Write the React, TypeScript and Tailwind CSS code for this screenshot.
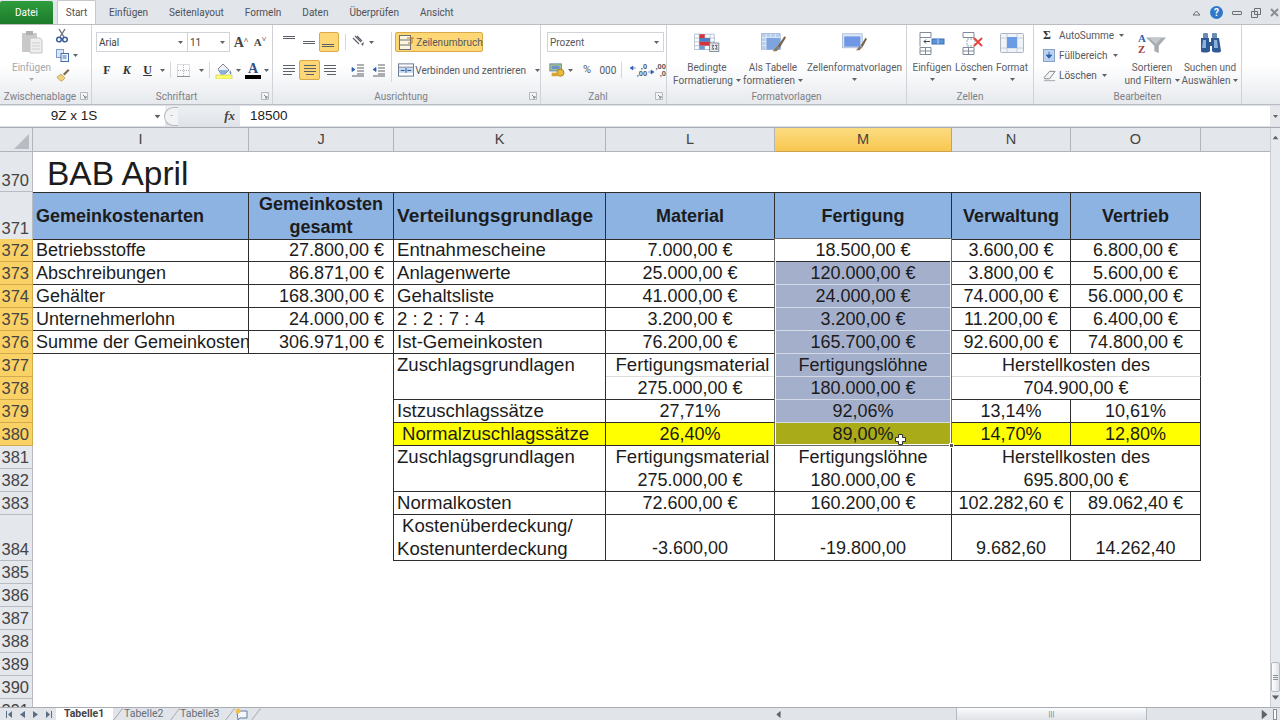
import type { ReactNode } from "react";

const Caret = ({ className = "" }: { className?: string }) => (
  <svg width="5" height="3" viewBox="0 0 5 3" className={`shrink-0 ${className}`}>
    <path d="M0 0h5L2.5 3z" fill="#5f6368" />
  </svg>
);

const Lines = ({ rows }: { rows: number[][] }) => (
  <svg width="16" height="14" viewBox="0 0 16 14">
    {rows.map((r, i) => (
      <rect key={i} x={r[0]} y={r[2]} width={r[1] - r[0]} height="1" fill="#5c6068" />
    ))}
  </svg>
);

const Launcher = () => (
  <svg width="8" height="8" viewBox="0 0 8 8">
    <path d="M.5.5h7v7h-7z" fill="#f2f3f5" stroke="#b5b8bd" />
    <path d="M3 3l3 3M6 4v2H4" stroke="#7d8087" fill="none" />
  </svg>
);

const Group = ({ label, className, children, launcher = false }: { label: string; className: string; children: ReactNode; launcher?: boolean }) => (
  <div className={`flex flex-col border-r border-[#cfd2d7] ${className}`}>
    <div className="h-[64px]">{children}</div>
    <div className="flex h-[14px] items-center text-[10px] text-[#7d8086]">
      <span className="flex-1 text-center">{label}</span>
      {launcher && (
        <span className="mr-[3px] flex">
          <Launcher />
        </span>
      )}
    </div>
  </div>
);

const Big = ({ className, icon, lines, caretInline = false }: { className: string; icon: ReactNode; lines: string[]; caretInline?: boolean }) => (
  <div className={`flex flex-col items-center pt-[6px] text-[10px] leading-[13px] text-[#5b5e64] ${className}`}>
    <div className="flex h-[24px] items-center justify-center">{icon}</div>
    <div className="mt-[6px] whitespace-nowrap text-center">{lines[0]}</div>
    {caretInline ? (
      <div className="flex items-center gap-[3px] whitespace-nowrap">
        {lines[1]}
        <Caret />
      </div>
    ) : (
      <Caret className="mt-[4px]" />
    )}
  </div>
);

const Clipboard = () => (
  <svg width="22" height="24" viewBox="0 0 22 24">
    <rect x="1" y="3" width="15" height="19" rx="1" fill="#c9c9c9" />
    <rect x="5" y="1" width="7" height="4" fill="#b0b0b0" />
    <path d="M9 8h10l2 2v13H9z" fill="#eeeeee" stroke="#c4c4c4" />
    <path d="M11 13h8M11 16h8M11 19h8" stroke="#cfcfcf" />
  </svg>
);

const Scissors = () => (
  <svg width="12" height="15" viewBox="0 0 12 15">
    <path d="M3 1l5 8M9 1L4 9" stroke="#6a7280" strokeWidth="1.4" />
    <circle cx="3" cy="11.5" r="2.3" fill="none" stroke="#3b5f9f" strokeWidth="1.6" />
    <circle cx="9" cy="11.5" r="2.3" fill="none" stroke="#3b5f9f" strokeWidth="1.6" />
  </svg>
);

const CopyIcon = () => (
  <svg width="13" height="13" viewBox="0 0 13 13">
    <rect x=".5" y=".5" width="7" height="8" fill="#dbe6f5" stroke="#7d9bc8" />
    <rect x="5" y="4.5" width="7.5" height="8" fill="#f2f6fc" stroke="#3f6db0" />
    <path d="M6.500 7h4M6.500 9h4" stroke="#3f6db0" />
  </svg>
);

const Brush = () => (
  <svg width="14" height="14" viewBox="0 0 14 14">
    <path d="M1 9l4-3 4 4-3 3c-2 0-4-2-5-4z" fill="#f1d27a" stroke="#a88b3c" strokeWidth=".6" />
    <path d="M7 6l5-5 1.500 1.500-5 5z" fill="#7d6a4a" />
  </svg>
);

const BorderGrid = () => (
  <svg width="13" height="13" viewBox="0 0 13 13">
    <path d="M.5.500h12v12H.5zM6.500 1v11M1 6.500h11" fill="none" stroke="#b4b8be" strokeDasharray="1 1" />
    <path d="M0 12.500h13" stroke="#8d9198" />
  </svg>
);

const Paint = () => (
  <svg width="18" height="17" viewBox="0 0 18 17">
    <path d="M3 7l5-5 6 6-4 4H6z" fill="#eef1f5" stroke="#7c8594" />
    <path d="M4 8h9l-3 4H6z" fill="#8ab0dc" />
    <path d="M15 8c1 2 2 3 1 4s-2-1-1-4z" fill="#6b85a8" />
    <rect x="1" y="13" width="16" height="4" fill="#ffff66" stroke="#b6b36a" strokeWidth=".5" />
  </svg>
);

const FontColor = () => (
  <div className="flex w-[16px] flex-col items-center">
    <span className="font-['Liberation_Serif',serif] text-[14px] font-bold leading-[13px] text-[#2f4f8f]">A</span>
    <div className="h-[4px] w-[16px] bg-black" />
  </div>
);

const Orient = () => (
  <svg width="15" height="14" viewBox="0 0 15 14">
    <path d="M2 3l6 6M4 1l6 6M6 1l5 5" stroke="#5c6068" strokeWidth="1.1" />
    <path d="M10 9l3-2-1 4z" fill="#5c6068" />
  </svg>
);

const Indent = ({ flip = false }: { flip?: boolean }) => (
  <svg width="14" height="13" viewBox="0 0 14 13">
    <path d="M6 1h7M6 4h7M6 7h7M6 10h7M1 12h12" stroke="#5c6068" />
    <path d={flip ? "M1 5.500h3M4 3.500v4L1 5.500z" : "M1 5.500h3M1 3.500v4l3-2z"} stroke="#2f62b0" fill="#2f62b0" strokeWidth=".8" />
  </svg>
);

const Wrap = () => (
  <svg width="16" height="15" viewBox="0 0 16 15" className="shrink-0">
    <rect x=".5" y=".5" width="11" height="14" fill="#fff7dd" stroke="#6d7077" />
    <path d="M1 5h10M1 10h10" stroke="#6d7077" />
    <path d="M8 3h7M13 3v5H9" stroke="#b0791d" fill="none" />
  </svg>
);

const Merge = () => (
  <svg width="16" height="14" viewBox="0 0 17 14" className="shrink-0">
    <rect x=".5" y=".5" width="16" height="13" fill="#fff" stroke="#67758d" />
    <path d="M1 4h15" stroke="#67758d" />
    <rect x="1" y="5" width="15" height="5" fill="#c4d9f2" />
    <path d="M3 7.500h4M14 7.500h-4M8.500 5v5" stroke="#21508f" />
  </svg>
);

const Money = () => (
  <svg width="18" height="17" viewBox="0 0 18 17">
    <rect x="1" y="1" width="13" height="8" fill="#a9c58e" stroke="#5f7f9f" />
    <rect x="3" y="3" width="9" height="4" fill="#6e93c5" />
    <circle cx="13" cy="11" r="4" fill="#e8b93a" stroke="#a47a1d" />
    <rect x="3" y="11" width="8" height="4" fill="#d9a52f" />
  </svg>
);

const Decimal = ({ a, b, flip = false }: { a: string; b: string; flip?: boolean }) => (
  <div className="flex w-[20px] items-center justify-center gap-[1px]">
    <svg width="6" height="10" viewBox="0 0 6 10" className="shrink-0">
      <path d={flip ? "M0 7h3M3 5v4L6 7z" : "M2 3h4M3 1v4L0 3z"} fill="#2f62b0" stroke="#2f62b0" strokeWidth=".6" />
    </svg>
    <div className="flex flex-col items-end font-['Liberation_Sans',sans-serif] text-[7.5px] font-bold leading-[7.5px] text-[#555]">
      <span>{a}</span>
      <span>{b}</span>
    </div>
  </div>
);

const Conditional = () => (
  <svg width="26" height="20" viewBox="0 0 34 25">
    <path d="M.500 1h26v20H.500z" fill="#fff" stroke="#9fb0c6" />
    <path d="M7 1v20M14 1v20M21 1v20M1 6h26M1 11h26M1 16h26" stroke="#a7b7cc" />
    <rect x="7" y="1" width="7" height="6" fill="#d6343b" />
    <rect x="7" y="6" width="14" height="5" fill="#4c7fc6" />
    <rect x="7" y="11" width="14" height="5" fill="#d6343b" />
    <rect x="7" y="16" width="7" height="5" fill="#6e98d2" />
    <rect x="20.500" y="12.500" width="12" height="11" fill="#eceef1" stroke="#68707c" />
    <path d="M23 15.500h3l-2 2.500 2 2.500h-3M31 15.500h-3l2 2.500-2 2.500h3" stroke="#2b3442" fill="none" />
  </svg>
);

const TableBrush = () => (
  <svg width="25" height="20" viewBox="0 0 32 25">
    <rect x=".5" y=".5" width="24" height="20" fill="#b9cfee" stroke="#9db2cf" />
    <path d="M6.500 1v20M12.500 1v20M18.500 1v20M1 5.500h24M1 10.500h24M1 15.500h24" stroke="#e8eef8" />
    <rect x="7" y="6" width="18" height="15" fill="#7fa4dd" />
    <path d="M15 23l5-6 3 2-3 4z" fill="#8a7658" />
    <path d="M21 17l9-13 2 1.500-8 13z" fill="#77644a" />
  </svg>
);

const StyleBrush = () => (
  <svg width="25" height="20" viewBox="0 0 34 26">
    <rect x=".5" y=".5" width="27" height="19" fill="#dfe7f3" stroke="#9db2cf" />
    <rect x="3" y="4" width="22" height="14" fill="#6f97e6" />
    <path d="M19 23l5-6 3 2-3 4z" fill="#8a7658" />
    <path d="M25 17l7-11 2 1.500-6 11z" fill="#77644a" />
  </svg>
);

const CellsInsert = () => (
  <svg width="26" height="23" viewBox="0 0 26 23">
    <path d="M1 .5h11v5H1zM1 15.500h11v7H1zM6.500 16v7M1 19h11" fill="#fff" stroke="#808b99" />
    <path d="M1 5.500v9" stroke="#808b99" />
    <rect x="13" y="7" width="12" height="5" fill="#5d93d8" stroke="#3a6fb4" />
    <path d="M19 7v5" stroke="#b9d3f2" />
    <path d="M11 9.500H5M7 7.500l-2 2 2 2" stroke="#3d4550" fill="none" />
  </svg>
);

const CellsDelete = () => (
  <svg width="24" height="23" viewBox="0 0 24 23">
    <path d="M1 .5h11v5H1zM1 15.500h11v7H1zM6.500 16v7M1 19h11" fill="#fff" stroke="#808b99" />
    <path d="M5 7h8v7H5z" fill="none" stroke="#9aa5b3" strokeDasharray="2 1" />
    <path d="M12 6l8 8M20 6l-8 8" stroke="#e4463e" strokeWidth="2" />
  </svg>
);

const FormatCells = () => (
  <svg width="24" height="24" viewBox="0 0 24 24">
    <rect x=".5" y="2.500" width="23" height="19" rx="1" fill="#f0f3f7" stroke="#aeb6c2" />
    <path d="M7 3v18M17 3v18M1 7h22M1 17h22" stroke="#c7ced8" />
    <rect x="7" y="6" width="10" height="11" fill="#6a9be3" />
  </svg>
);

const Fill = () => (
  <svg width="12" height="13" viewBox="0 0 13 14">
    <rect x=".5" y=".5" width="12" height="13" fill="#bcd2ee" stroke="#7f9cc4" />
    <path d="M6.500 3v6M3.500 6.500l3 3.500 3-3.500z" fill="#2f62b0" stroke="#2f62b0" />
  </svg>
);

const Eraser = () => (
  <svg width="14" height="12" viewBox="0 0 15 12">
    <path d="M1 8l6-7h6l-6 8H2z" fill="#f5f5f5" stroke="#7c8087" />
    <path d="M1 11h12" stroke="#9da1a8" />
  </svg>
);

const SortFilter = () => (
  <svg width="30" height="24" viewBox="0 0 33 24">
    <path d="M10 6h22l-8 9v8l-5-2v-6z" fill="#a9adb3" />
    <path d="M13 6h14l-6 7z" fill="#c6c9ce" />
    <text x="1" y="11" fontSize="12" fontWeight="700" fontFamily="Liberation Serif, serif" fill="#2e62aa">A</text>
    <text x="1" y="23" fontSize="12" fontWeight="700" fontFamily="Liberation Serif, serif" fill="#a83a3a">Z</text>
  </svg>
);

const Binoculars = () => (
  <svg width="24" height="22" viewBox="0 0 24 22">
    <rect x="5" y="1" width="5" height="6" rx="1" fill="#6b8bb5" />
    <rect x="14" y="1" width="5" height="6" rx="1" fill="#6b8bb5" />
    <path d="M3 6h8v4h2V6h8l2 13c0 2-8 2-9 0v-5h-2v5c-1 2-9 2-9 0z" fill="#2f5a93" />
    <path d="M5 8h3v8H4zM16 8h3l1 8h-4z" fill="#8db1dc" />
  </svg>
);

const Ribbon = () => (
  <div className="flex h-[81px] shrink-0 border-y border-[#b9bcc1] bg-gradient-to-b from-white from-50% to-[#e6e9ed] font-['Roboto',sans-serif]">
    <Group label="Zwischenablage" className="w-[92px]" launcher>
      <div className="flex">
        <div className="flex w-[54px] flex-col items-center pl-[9px] pt-[5px] text-[10px] leading-[13px] text-[#a5a7ab]">
          <div className="flex h-[24px] items-center">
            <Clipboard />
          </div>
          <div className="mt-[7px]">Einfügen</div>
          <Caret className="mt-[4px] opacity-50" />
        </div>
        <div className="flex flex-col gap-[6px] pl-[2px] pt-[3px]">
          <Scissors />
          <div className="flex items-center gap-[4px]">
            <CopyIcon />
            <Caret />
          </div>
          <Brush />
        </div>
      </div>
    </Group>

    <Group label="Schriftart" className="w-[181px]" launcher>
      <div className="flex flex-col gap-[8px] pl-[4px] pt-[7px]">
        <div className="flex h-[20px] items-center">
          <div className="flex h-[20px] w-[92px] items-center justify-between border border-[#d0d3d8] bg-white px-[2px] pr-[4px] text-[10px] text-[#444]">
            Arial
            <Caret />
          </div>
          <div className="flex h-[20px] w-[42px] items-center justify-between border border-l-0 border-[#d0d3d8] bg-white px-[2px] pr-[4px] text-[10px] text-[#444]">
            11
            <Caret />
          </div>
          <span className="ml-[3px] w-[16px] text-center font-['Liberation_Serif',serif] text-[14px] font-bold text-[#444]">A<sup className="text-[8px]">˄</sup></span>
          <span className="ml-[3px] w-[16px] text-center font-['Liberation_Serif',serif] text-[11px] font-bold text-[#444]">A<sup className="text-[8px]">˅</sup></span>
        </div>
        <div className="flex h-[20px] items-center font-['Liberation_Serif',serif] text-[12px] font-bold text-[#333]">
          <span className="ml-[1px] w-[20px] text-center">F</span>
          <span className="w-[20px] text-center italic">K</span>
          <span className="ml-[1px] w-[20px] text-center underline">U</span>
          <span className="flex w-[10px] justify-center">
            <Caret />
          </span>
          <span className="ml-[3px] h-[16px] w-px bg-[#d5d7db]" />
          <span className="ml-[6px] flex w-[13px]">
            <BorderGrid />
          </span>
          <span className="ml-[6px] flex w-[10px] justify-center">
            <Caret />
          </span>
          <span className="ml-[3px] h-[16px] w-px bg-[#d5d7db]" />
          <span className="ml-[5px] flex w-[18px]">
            <Paint />
          </span>
          <span className="ml-[1px] flex w-[9px] justify-center">
            <Caret />
          </span>
          <span className="ml-[2px] flex">
            <FontColor />
          </span>
          <span className="flex w-[11px] justify-center">
            <Caret />
          </span>
        </div>
      </div>
    </Group>

    <Group label="Ausrichtung" className="w-[268px]" launcher>
      <div className="flex pt-[7px]">
        <div className="flex flex-col gap-[8px] pl-[6px]">
          <div className="flex h-[20px] items-center">
            <span className="flex w-[20px] justify-center"><Lines rows={[[2, 14, 1], [2, 14, 3]]} /></span>
            <span className="flex w-[20px] justify-center"><Lines rows={[[2, 14, 6], [2, 14, 8]]} /></span>
            <span className="flex h-[20px] w-[20px] items-center justify-center rounded-[2px] border border-[#d9a94a] bg-[#fdd675]"><Lines rows={[[1, 13, 9], [1, 13, 11]]} /></span>
          </div>
          <div className="flex h-[20px] items-center">
            <span className="flex w-[20px] justify-center"><Lines rows={[[2, 14, 2], [2, 14, 5], [2, 14, 8], [2, 11, 11]]} /></span>
            <span className="flex h-[20px] w-[21px] items-center justify-center rounded-[2px] border border-[#d9a94a] bg-[#fdd675]"><Lines rows={[[2, 14, 2], [2, 14, 5], [2, 14, 8], [4, 12, 11]]} /></span>
            <span className="flex w-[20px] justify-center"><Lines rows={[[2, 14, 2], [2, 14, 5], [2, 14, 8], [5, 14, 11]]} /></span>
          </div>
        </div>
        <div className="ml-[5px] mt-[2px] h-[16px] w-px bg-[#d5d7db]" />
        <div className="flex w-[44px] flex-col gap-[8px]">
          <div className="flex h-[20px] items-center gap-[3px] pl-[5px]">
            <Orient />
            <Caret />
          </div>
          <div className="flex h-[20px] items-center gap-[7px] pl-[5px]">
            <Indent />
            <Indent flip />
          </div>
        </div>
        <div className="ml-[4px] h-[50px] w-px bg-[#d5d7db]" />
        <div className="flex flex-col gap-[8px] pl-[3px] text-[10px] text-[#55585e]">
          <div className="flex h-[20px] w-[88px] items-center gap-[1px] rounded-[2px] border border-[#d9a94a] bg-[#fdd675] pl-[3px]">
            <Wrap />
            Zeilenumbruch
          </div>
          <div className="flex h-[20px] items-center gap-[1px] whitespace-nowrap pl-[3px]">
            <Merge />
            Verbinden und zentrieren
            <Caret className="ml-[8px]" />
          </div>
        </div>
      </div>
    </Group>

    <Group label="Zahl" className="w-[126px]" launcher>
      <div className="flex flex-col gap-[8px] pl-[6px] pt-[7px] text-[#55585e]">
        <div className="flex h-[20px] w-[117px] items-center justify-between border border-[#d0d3d8] bg-white px-[2px] pr-[4px] text-[10px]">
          Prozent
          <Caret />
        </div>
        <div className="flex h-[20px] items-center pl-[2px] text-[10px]">
          <Money />
          <Caret className="ml-[3px]" />
          <span className="ml-[8px] w-[14px] text-center text-[11px]">%</span>
          <span className="ml-[5px] w-[22px] text-center">000</span>
          <span className="ml-[3px] h-[16px] w-px bg-[#d5d7db]" />
          <span className="ml-[7px]"><Decimal a=",0" b=",00" /></span>
          <Decimal a=",00" b=",0" flip />
        </div>
      </div>
    </Group>

    <Group label="Formatvorlagen" className="w-[240px]">
      <div className="flex">
        <Big className="w-[80px]" icon={<Conditional />} lines={["Bedingte", "Formatierung"]} caretInline />
        <Big className="w-[52px]" icon={<TableBrush />} lines={["Als Tabelle", "formatieren"]} caretInline />
        <Big className="w-[107px] pl-[4px]" icon={<StyleBrush />} lines={["Zellenformatvorlagen"]} />
      </div>
    </Group>

    <Group label="Zellen" className="w-[127px]">
      <div className="flex pl-[3px]">
        <Big className="w-[44px]" icon={<CellsInsert />} lines={["Einfügen"]} />
        <Big className="w-[40px]" icon={<CellsDelete />} lines={["Löschen"]} />
        <Big className="w-[36px]" icon={<FormatCells />} lines={["Format"]} />
      </div>
    </Group>

    <Group label="Bearbeiten" className="w-[208px]">
      <div className="flex">
        <div className="flex w-[88px] shrink-0 flex-col gap-[7px] pl-[9px] pt-[4px] text-[10px] leading-[13px] text-[#55585e]">
          <div className="flex h-[13px] items-center whitespace-nowrap">
            <span className="w-[16px] shrink-0 font-['Liberation_Serif',serif] text-[12px] font-bold text-[#333]">Σ</span>
            AutoSumme
            <Caret className="ml-[5px]" />
          </div>
          <div className="flex h-[13px] items-center whitespace-nowrap">
            <span className="flex w-[16px] shrink-0"><Fill /></span>
            Füllbereich
            <Caret className="ml-[5px]" />
          </div>
          <div className="flex h-[13px] items-center whitespace-nowrap">
            <span className="flex w-[16px] shrink-0"><Eraser /></span>
            Löschen
            <Caret className="ml-[5px]" />
          </div>
        </div>
        <Big className="w-[60px]" icon={<SortFilter />} lines={["Sortieren", "und Filtern"]} caretInline />
        <Big className="w-[56px]" icon={<Binoculars />} lines={["Suchen und", "Auswählen"]} caretInline />
      </div>
    </Group>
    <div className="flex-1" />
  </div>
);

const TitleBar = () => (
  <div className="flex h-[24px] shrink-0 items-end bg-[#e2e5ea] font-['Roboto',sans-serif] text-[10px] text-[#4e5157]">
    <div className="flex h-[23px] w-[53px] items-center justify-center rounded-t-[2px] bg-gradient-to-b from-[#2f9d3d] to-[#1c7a2b] text-white">Datei</div>
    <div className="ml-[4px] flex h-[24px] w-[39px] items-center justify-center rounded-t-[2px] border border-b-0 border-[#c5c8cd] bg-white">Start</div>
    <div className="flex h-[23px] items-center gap-[21px] pl-[13px]">
      <span>Einfügen</span>
      <span>Seitenlayout</span>
      <span>Formeln</span>
      <span>Daten</span>
      <span>Überprüfen</span>
      <span>Ansicht</span>
    </div>
    <div className="ml-auto flex h-[23px] items-center gap-[9px] pr-[1px]">
      <svg width="9" height="6" viewBox="0 0 9 6"><path d="M1 5l3.500-4L8 5z" fill="none" stroke="#6a6e75" /></svg>
      <span className="flex h-[13px] w-[13px] items-center justify-center rounded-full bg-[#2f78c9] text-[10px] font-bold text-white">?</span>
      <span className="h-[4px] w-[10px] rounded-[1px] border border-[#6a6e75]" />
      <svg width="10" height="10" viewBox="0 0 10 10"><path d="M3.500.5h6v6h-6zM.5 3.500h6v6h-6z" fill="#e2e5ea" stroke="#6a6e75" /></svg>
      <svg width="9" height="9" viewBox="0 0 9 9"><path d="M1 1l7 7M8 1L1 8" stroke="#8a8e95" strokeWidth="2" /></svg>
    </div>
  </div>
);

const FormulaBar = () => (
  <div className="flex h-[23px] shrink-0 items-stretch border-b border-[#a9adb3] bg-[#dcdfe4] pb-[1px] pt-[1px] font-['Liberation_Sans',sans-serif] text-[13.5px] text-[#222]">
    <div className="flex w-[165px] items-center justify-between bg-white pr-[5px]">
      <span className="w-[148px] text-center">9Z x 1S</span>
      <Caret className="scale-125" />
    </div>
    <div className="flex w-[75px] items-center justify-between bg-gradient-to-b from-[#edf0f3] to-[#e0e3e8] pr-[5px]">
      <span className="-ml-[1px] flex h-[19px] w-[14px] items-center justify-center rounded-l-full border-l border-t border-b border-[#b5b9bf] bg-[#f1f3f5] text-[9px] text-[#9ea2a8]">-</span>
      <span className="font-['Liberation_Serif',serif] text-[13px] font-bold italic text-[#444]">fx</span>
    </div>
    <div className="flex flex-1 items-center bg-white pl-[10px]">18500</div>
    <div className="flex w-[10px] items-center justify-center bg-[#e6e8ec]">
      <Caret />
    </div>
  </div>
);

const COLS = "grid grid-cols-[33px_216px_145px_212px_169px_177px_119px_130px_69px]";
const LINE = "border-r border-b border-[#2d2d2d]";
const CELL = "flex items-center overflow-hidden whitespace-nowrap px-[3px]";
const SEL = "bg-[#a4afcb] border-b border-b-[#d5dae7]";
const WIDE = "pb-[2px] text-[18.6px]";

const ColumnHeader = () => (
  <div className="flex h-[24px] shrink-0 font-['Liberation_Sans',sans-serif] text-[14.5px] text-[#444]">
    <div className={`flex-1 ${COLS} bg-[#e3e6eb]`}>
      <div className="flex items-end justify-end border-b border-r border-[#b1b5bb] p-[2px] pr-[3px]">
        <svg width="15" height="15" viewBox="0 0 15 15"><path d="M15 0v15H0z" fill="#b8bcc2" /></svg>
      </div>
      {["I", "J", "K", "L"].map((c) => (
        <div key={c} className="flex items-center justify-center border-b border-r border-[#b1b5bb]">{c}</div>
      ))}
      <div className="flex items-center justify-center border-b border-r border-[#c9a34d] bg-gradient-to-b from-[#fbdc80] to-[#f9c74f]">M</div>
      {["N", "O"].map((c) => (
        <div key={c} className="flex items-center justify-center border-b border-r border-[#b1b5bb]">{c}</div>
      ))}
      <div className="border-b border-[#b1b5bb]" />
    </div>
  </div>
);

const RowHead = ({ n, on = false }: { n: number; on?: boolean }) => (
  <div className={`flex items-end justify-end border-b border-r pr-[3px] font-['Liberation_Sans',sans-serif] text-[16.5px] font-normal leading-[22px] text-[#444] ${on ? "border-[#d5a94e] bg-[#fad165]" : "border-[#b9bdc3] bg-[#e4e7ec]"}`}>
    {n}
  </div>
);

const top = [
  ["Betriebsstoffe", "27.800,00 €", "Entnahmescheine", "7.000,00 €", "18.500,00 €", "3.600,00 €", "6.800,00 €"],
  ["Abschreibungen", "86.871,00 €", "Anlagenwerte", "25.000,00 €", "120.000,00 €", "3.800,00 €", "5.600,00 €"],
  ["Gehälter", "168.300,00 €", "Gehaltsliste", "41.000,00 €", "24.000,00 €", "74.000,00 €", "56.000,00 €"],
  ["Unternehmerlohn", "24.000,00 €", "2 : 2 : 7 : 4", "3.200,00 €", "3.200,00 €", "11.200,00 €", "6.400,00 €"],
  ["Summe der Gemeinkosten", "306.971,00 €", "Ist-Gemeinkosten", "76.200,00 €", "165.700,00 €", "92.600,00 €", "74.800,00 €"],
];

const Blank = () => <div className="col-span-2 border-r border-[#2d2d2d]" />;

const Sheet = () => (
  <div className="relative min-h-0 flex-1 overflow-hidden bg-white font-['Liberation_Sans',sans-serif] text-[18px] leading-[23px] text-[#1c1c1c]">
    <div className={`${COLS} h-[40px]`}>
      <RowHead n={370} />
      <div className="col-span-8 flex items-center pl-[14px] pt-[4px] text-[33.5px] leading-[36px]">BAB April</div>
    </div>

    <div className={`${COLS} h-[47px] font-bold`}>
      <RowHead n={371} />
      <div className={`${LINE} ${CELL} bg-[#8db3e2] border-t`}>Gemeinkostenarten</div>
      <div className={`${LINE} bg-[#8db3e2] border-t text-center flex items-center justify-center`}>Gemeinkosten<br />gesamt</div>
      <div className={`${LINE} ${CELL} bg-[#8db3e2] border-t pb-[2px] text-[19.2px]`}>Verteilungsgrundlage</div>
      <div className={`${LINE} ${CELL} justify-center bg-[#8db3e2] border-t`}>Material</div>
      <div className={`${LINE} ${CELL} justify-center bg-[#8db3e2] border-t`}>Fertigung</div>
      <div className={`${LINE} ${CELL} justify-center bg-[#8db3e2] border-t`}>Verwaltung</div>
      <div className={`${LINE} ${CELL} justify-center bg-[#8db3e2] border-t`}>Vertrieb</div>
    </div>

    {top.map((r, i) => (
      <div key={r[0]} className={`${COLS} h-[23px]`}>
        <RowHead n={372 + i} on />
        <div className={`${LINE} overflow-hidden whitespace-nowrap pl-[3px]`}>{r[0]}</div>
        <div className={`${LINE} ${CELL} justify-end pr-[9px]`}>{r[1]}</div>
        <div className={`${LINE} ${CELL} ${WIDE}`}>{r[2]}</div>
        <div className={`${LINE} ${CELL} justify-center`}>{r[3]}</div>
        <div className={`${CELL} justify-center border-r border-[#2d2d2d] ${i === 0 ? "border-b bg-white" : SEL}`}>{r[4]}</div>
        <div className={`${LINE} ${CELL} justify-center`}>{r[5]}</div>
        <div className={`${LINE} ${CELL} justify-center`}>{r[6]}</div>
      </div>
    ))}

    <div className={`${COLS} h-[23px]`}>
      <RowHead n={377} on />
      <Blank />
      <div className={`${CELL} ${WIDE} border-r border-[#2d2d2d]`}>Zuschlagsgrundlagen</div>
      <div className={`${CELL} ${WIDE} justify-center border-r border-b border-r-[#2d2d2d] border-b-[#dcdcdc] pl-[5px] pr-0`}>Fertigungsmaterial</div>
      <div className={`${CELL} justify-center border-r border-r-[#2d2d2d] ${SEL}`}>Fertigungslöhne</div>
      <div className={`${CELL} col-span-2 justify-center border-r border-b border-r-[#2d2d2d] border-b-[#dcdcdc]`}>Herstellkosten des</div>
    </div>
    <div className={`${COLS} h-[23px]`}>
      <RowHead n={378} on />
      <Blank />
      <div className={LINE} />
      <div className={`${LINE} ${CELL} justify-center`}>275.000,00 €</div>
      <div className={`${CELL} justify-center border-r border-r-[#2d2d2d] ${SEL}`}>180.000,00 €</div>
      <div className={`${LINE} ${CELL} col-span-2 justify-center`}>704.900,00 €</div>
    </div>
    <div className={`${COLS} h-[23px]`}>
      <RowHead n={379} on />
      <Blank />
      <div className={`${LINE} ${CELL} ${WIDE}`}>Istzuschlagssätze</div>
      <div className={`${LINE} ${CELL} justify-center`}>27,71%</div>
      <div className={`${CELL} justify-center border-r border-r-[#2d2d2d] ${SEL}`}>92,06%</div>
      <div className={`${LINE} ${CELL} justify-center`}>13,14%</div>
      <div className={`${LINE} ${CELL} justify-center`}>10,61%</div>
    </div>
    <div className={`${COLS} h-[23px]`}>
      <RowHead n={380} on />
      <Blank />
      <div className={`${LINE} ${CELL} ${WIDE} bg-[#ffff00] pl-[8px]`}>Normalzuschlagssätze</div>
      <div className={`${LINE} ${CELL} justify-center bg-[#ffff00]`}>26,40%</div>
      <div className={`${LINE} ${CELL} justify-center bg-[#a9ab18]`}>89,00%</div>
      <div className={`${LINE} ${CELL} justify-center bg-[#ffff00]`}>14,70%</div>
      <div className={`${LINE} ${CELL} justify-center bg-[#ffff00]`}>12,80%</div>
    </div>
    <div className={`${COLS} h-[23px]`}>
      <RowHead n={381} />
      <Blank />
      <div className={`${CELL} ${WIDE} border-r border-[#2d2d2d]`}>Zuschlagsgrundlagen</div>
      <div className={`${CELL} ${WIDE} justify-center border-r border-[#2d2d2d] pl-[5px] pr-0`}>Fertigungsmaterial</div>
      <div className={`${CELL} justify-center border-r border-[#2d2d2d]`}>Fertigungslöhne</div>
      <div className={`${CELL} col-span-2 justify-center border-r border-[#2d2d2d]`}>Herstellkosten des</div>
    </div>
    <div className={`${COLS} h-[23px]`}>
      <RowHead n={382} />
      <Blank />
      <div className={LINE} />
      <div className={`${LINE} ${CELL} justify-center`}>275.000,00 €</div>
      <div className={`${LINE} ${CELL} justify-center`}>180.000,00 €</div>
      <div className={`${LINE} ${CELL} col-span-2 justify-center`}>695.800,00 €</div>
    </div>
    <div className={`${COLS} h-[23px]`}>
      <RowHead n={383} />
      <Blank />
      <div className={`${LINE} ${CELL} ${WIDE}`}>Normalkosten</div>
      <div className={`${LINE} ${CELL} justify-center`}>72.600,00 €</div>
      <div className={`${LINE} ${CELL} justify-center`}>160.200,00 €</div>
      <div className={`${LINE} ${CELL} justify-center`}>102.282,60 €</div>
      <div className={`${LINE} ${CELL} justify-center`}>89.062,40 €</div>
    </div>
    <div className={`${COLS} h-[46px]`}>
      <RowHead n={384} />
      <Blank />
      <div className={`${LINE} ${WIDE} flex flex-col overflow-hidden whitespace-nowrap pl-[3px]`}>
        <span className="-mt-[1px] pl-[5px]">Kostenüberdeckung/</span>
        <span>Kostenunterdeckung</span>
      </div>
      <div className={`${LINE} flex items-end justify-center`}>-3.600,00</div>
      <div className={`${LINE} flex items-end justify-center`}>-19.800,00</div>
      <div className={`${LINE} flex items-end justify-center`}>9.682,60</div>
      <div className={`${LINE} flex items-end justify-center`}>14.262,40</div>
    </div>

    {[385, 386, 387, 388, 389, 390, 391].map((n) => (
      <div key={n} className={`${COLS} h-[23px]`}>
        <RowHead n={n} />
      </div>
    ))}

    {/* selection frame over column M */}
    <div className="pointer-events-none absolute left-[774px] top-[86px] h-[208px] w-[178px] border border-[#6a6a6a] shadow-[inset_0_0_0_1px_#ffffff]">
      <span className="absolute -bottom-[3px] -right-[3px] h-[5px] w-[5px] border border-white bg-[#555]" />
    </div>
    <svg width="11" height="11" viewBox="0 0 11 11" className="absolute left-[895px] top-[282px]">
      <path d="M3.500.5h4v3h3v4h-3v3h-4v-3h-3v-4h3z" fill="#fff" stroke="#333" />
    </svg>
  </div>
);

const VScroll = () => (
  <div className="flex w-[10px] shrink-0 flex-col items-center border-l border-[#c9ccd1] bg-[#e6e9ee]">
    <Caret className="mt-[8px] rotate-180 scale-125" />
    <div className="flex-1" />
    <div className="flex h-[30px] w-[9px] flex-col items-center justify-center gap-[1px] rounded-[2px] border border-[#b5b9c0] bg-gradient-to-r from-white to-[#dde0e5]">
      <span className="h-px w-[5px] bg-[#8a8e95]" />
      <span className="h-px w-[5px] bg-[#8a8e95]" />
      <span className="h-px w-[5px] bg-[#8a8e95]" />
    </div>
    <Caret className="mb-[8px] mt-[4px] scale-150" />
  </div>
);

const Slant = () => (
  <svg width="10" height="13" viewBox="0 0 10 13" className="shrink-0">
    <path d="M0 13L9 1h1" fill="none" stroke="#a5a9b0" />
  </svg>
);

const BottomBar = () => (
  <div className="flex h-[13px] shrink-0 items-center border-t border-[#a9adb3] bg-[#e1e5ea] font-['Roboto',sans-serif] text-[10.5px] text-[#6a6d73]">
    <div className="flex w-[56px] items-center gap-[8px] pl-[6px] text-[#5a6d85]">
      <svg width="6" height="7" viewBox="0 0 6 7"><path d="M0 0h1v7H0zM6 0v7L2 3.500z" fill="currentColor" /></svg>
      <svg width="5" height="7" viewBox="0 0 5 7"><path d="M5 0v7L0 3.500z" fill="currentColor" /></svg>
      <svg width="5" height="7" viewBox="0 0 5 7"><path d="M0 0v7l5-3.500z" fill="currentColor" /></svg>
      <svg width="6" height="7" viewBox="0 0 6 7"><path d="M5 0h1v7H5zM0 0v7l4-3.500z" fill="currentColor" /></svg>
    </div>
    <div className="flex h-[13px] w-[57px] items-center bg-white pl-[8px] font-bold text-[#444]">Tabelle1</div>
    <Slant />
    <div className="w-[47px] pl-[1px]">Tabelle2</div>
    <Slant />
    <div className="w-[45px]">Tabelle3</div>
    <Slant />
    <svg width="13" height="12" viewBox="0 0 13 12" className="shrink-0">
      <path d="M2 3h10v7H5l-2 2z" fill="#f5f7fa" stroke="#5c7fa8" />
      <circle cx="3" cy="3" r="2.500" fill="#f0c14b" />
    </svg>
    <span className="ml-[3px]"><Slant /></span>
    <div className="ml-[512px] flex w-[10px] justify-center">
      <Caret className="rotate-90 scale-150" />
    </div>
    <div className="ml-[173px] flex h-[12px] w-[191px] items-center justify-center border-x border-[#b5b9c0] bg-gradient-to-b from-[#fafbfc] to-[#dfe2e7] text-[8px] text-[#777]">|||</div>
    <div className="ml-auto flex items-center gap-[6px] pr-[3px]">
      <Caret className="-rotate-90 scale-[2]" />
      <span className="h-[11px] w-[4px] border border-[#8a8e95] bg-white" />
    </div>
  </div>
);

export default function App() {
  return (
    <div className="flex h-screen w-[1280px] flex-col overflow-hidden bg-white">
      <TitleBar />
      <Ribbon />
      <FormulaBar />
      <div className="flex min-h-0 flex-1">
        <div className="flex min-w-0 flex-1 flex-col">
          <ColumnHeader />
          <Sheet />
        </div>
        <VScroll />
      </div>
      <BottomBar />
    </div>
  );
}
